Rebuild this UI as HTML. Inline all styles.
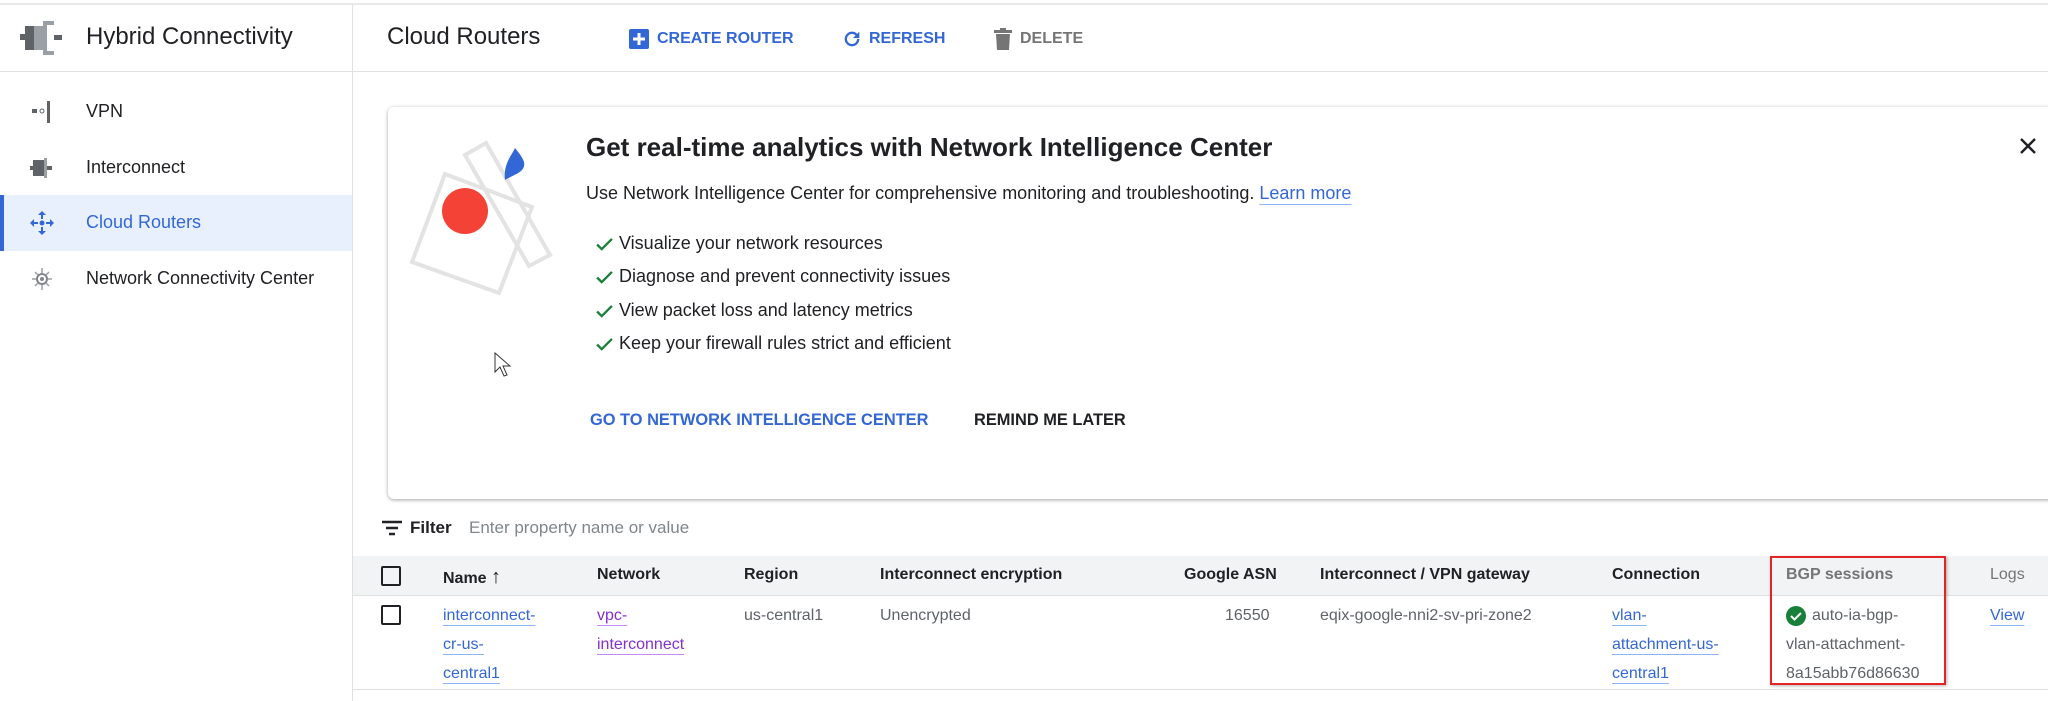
<!DOCTYPE html>
<html><head><meta charset="utf-8"><style>
*{box-sizing:border-box;margin:0;padding:0}
body{width:2048px;height:701px;overflow:hidden;background:#fff;font-family:"Liberation Sans",Arial,sans-serif;color:#202124;position:relative}
.a{position:absolute;white-space:nowrap}
.nav{font-size:18px;color:#202124}
.btn{font-size:16px;font-weight:bold;color:#3367d6}
.th{font-size:16px;font-weight:bold;color:#202124;top:566px}
.td{font-size:16px;color:#5f6368;line-height:29px}
.lk{color:#3367d6;text-decoration:underline;text-underline-offset:5px;text-decoration-color:#8ab4f8}
.chk{position:absolute;left:596px;width:17px;height:13px}
.li{font-size:18px;color:#202124;left:619px}
</style></head><body>
<div class="a" style="left:0;top:3px;width:2048px;height:2px;background:#e8e8e8"></div>
<div class="a" style="left:352px;top:4px;width:1px;height:697px;background:#e0e0e0"></div>
<div class="a" style="left:0;top:71px;width:2048px;height:1px;background:#e0e0e0"></div>

<svg class="a" style="left:20px;top:18px" width="44" height="40" viewBox="0 0 44 40"><rect x="0" y="16" width="5" height="6" fill="#5f6368"/><rect x="5" y="8" width="18" height="24" fill="#5f6368"/><rect x="14" y="8" width="9" height="24" fill="#9aa0a6"/><rect x="23" y="3" width="4" height="34" fill="#9aa0a6"/><rect x="27" y="3" width="7" height="4" fill="#9aa0a6"/><rect x="27" y="33" width="7" height="4" fill="#9aa0a6"/><rect x="34" y="17" width="8" height="5" fill="#5f6368"/></svg>
<div class="a" style="left:86px;top:23px;font-size:24px">Hybrid Connectivity</div>

<svg class="a" style="left:32px;top:101px" width="20" height="22"><rect x="0" y="8" width="5" height="4" fill="#5f6368"/><circle cx="10" cy="10" r="2" fill="none" stroke="#5f6368"/><rect x="15" y="0" width="3" height="22" fill="#5f6368"/></svg>
<div class="a nav" style="left:86px;top:101px">VPN</div>
<svg class="a" style="left:30px;top:157px" width="24" height="22"><rect x="0" y="9" width="3" height="4" fill="#5f6368"/><rect x="3" y="3" width="11" height="16" fill="#5f6368"/><rect x="14" y="1" width="3" height="20" fill="#9aa0a6"/><rect x="17" y="9" width="5" height="4" fill="#5f6368"/></svg>
<div class="a nav" style="left:86px;top:157px">Interconnect</div>
<div class="a" style="left:0;top:195px;width:352px;height:56px;background:#e8f0fe"></div>
<div class="a" style="left:0;top:195px;width:4px;height:56px;background:#3367d6"></div>
<svg class="a" style="left:30px;top:211px" width="24" height="24" viewBox="0 0 24 24" fill="#3367d6"><path d="M12 0l4 4h-3v4h-2V4H8z M12 24l-4-4h3v-4h2v4h3z M0 12l4-4v3h4v2H4v3z M24 12l-4 4v-3h-4v-2h4V8z"/><circle cx="12" cy="12" r="2.5"/></svg>
<div class="a nav" style="left:86px;top:212px;color:#3367d6">Cloud Routers</div>
<svg class="a" style="left:32px;top:268px" width="20" height="22" viewBox="0 0 20 22"><circle cx="10" cy="11" r="5" fill="none" stroke="#80868b" stroke-width="2"/><circle cx="10" cy="11" r="2" fill="#80868b"/><path d="M10 0v5M10 17v5M0 11h4M16 11h4M3 4l3 3M17 4l-3 3M3 18l3-3M17 18l-3-3" stroke="#9aa0a6" stroke-width="1.5"/></svg>
<div class="a nav" style="left:86px;top:268px">Network Connectivity Center</div>

<div class="a" style="left:387px;top:23px;font-size:24px">Cloud Routers</div>
<svg class="a" style="left:629px;top:29px" width="20" height="20"><rect width="20" height="20" rx="2" fill="#3367d6"/><path d="M10 4v12M4 10h12" stroke="#fff" stroke-width="3"/></svg>
<div class="a btn" style="left:657px;top:30px">CREATE ROUTER</div>
<svg class="a" style="left:841px;top:28px" width="22" height="22" viewBox="0 0 24 24"><path fill="#3367d6" d="M17.65 6.35A7.96 7.96 0 0012 4a8 8 0 108 8h-2.5a5.5 5.5 0 11-1.6-3.9L13 11h7V4z"/></svg>
<div class="a btn" style="left:869px;top:30px">REFRESH</div>
<svg class="a" style="left:994px;top:28px" width="18" height="22" viewBox="0 0 18 22"><rect x="0" y="2" width="18" height="3" fill="#757575"/><rect x="6" y="0" width="6" height="3" fill="#757575"/><path d="M2 6h14l-1 16H3z" fill="#757575"/></svg>
<div class="a btn" style="left:1020px;top:30px;color:#757575">DELETE</div>

<div class="a" style="left:388px;top:107px;width:1680px;height:392px;border-radius:6px;box-shadow:0 1px 3px rgba(60,64,67,.35),0 1px 5px rgba(60,64,67,.15);background:#fff"></div>
<svg class="a" style="left:400px;top:130px" width="170" height="180">
<polygon points="45,44 132,77 99,163 12,132" fill="none" stroke="#e3e3e3" stroke-width="4"/>
<polygon points="65,25 86,13 150,125 129,136" fill="none" stroke="#e3e3e3" stroke-width="4"/>
<circle cx="65" cy="81" r="23" fill="#f44336"/>
<path d="M115 18 C112 25 103 34 105 50 C115 44 126 42 124 32 C122 26 118 22 115 18Z" fill="#3367d6"/>
</svg>
<svg class="a" style="left:494px;top:352px" width="20" height="26" viewBox="0 0 20 26"><path d="M1 1v19l5-5 4 9 3-1-4-9h7z" fill="#fff" stroke="#333" stroke-width="1"/></svg>
<div class="a" style="left:586px;top:132px;font-size:26px;font-weight:bold;color:#202124">Get real-time analytics with Network Intelligence Center</div>
<div class="a" style="left:586px;top:183px;font-size:18px">Use Network Intelligence Center for comprehensive monitoring and troubleshooting. <span class="lk" style="color:#3367d6">Learn more</span></div>
<svg class="chk" style="top:238px" viewBox="0 0 18 14"><path d="M1 7l5 5L17 1" fill="none" stroke="#188038" stroke-width="2.5"/></svg>
<div class="a li" style="top:233px">Visualize your network resources</div>
<svg class="chk" style="top:271px" viewBox="0 0 18 14"><path d="M1 7l5 5L17 1" fill="none" stroke="#188038" stroke-width="2.5"/></svg>
<div class="a li" style="top:266px">Diagnose and prevent connectivity issues</div>
<svg class="chk" style="top:305px" viewBox="0 0 18 14"><path d="M1 7l5 5L17 1" fill="none" stroke="#188038" stroke-width="2.5"/></svg>
<div class="a li" style="top:300px">View packet loss and latency metrics</div>
<svg class="chk" style="top:338px" viewBox="0 0 18 14"><path d="M1 7l5 5L17 1" fill="none" stroke="#188038" stroke-width="2.5"/></svg>
<div class="a li" style="top:333px">Keep your firewall rules strict and efficient</div>
<div class="a btn" style="left:590px;top:411px;font-size:16.4px">GO TO NETWORK INTELLIGENCE CENTER</div>
<div class="a btn" style="left:974px;top:411px;color:#202124;font-size:16.4px">REMIND ME LATER</div>
<svg class="a" style="left:2020px;top:138px" width="16" height="16"><path d="M1 1l14 14M15 1L1 15" stroke="#202124" stroke-width="2.4"/></svg>

<svg class="a" style="left:382px;top:520px" width="20" height="16"><path d="M0 2h20M4 8h12M7 14h6" stroke="#202124" stroke-width="2.4"/></svg>
<div class="a" style="left:410px;top:518px;font-size:17px;font-weight:bold">Filter</div>
<div class="a" style="left:469px;top:518px;font-size:17px;color:#80868b">Enter property name or value</div>

<div class="a" style="left:353px;top:556px;width:1695px;height:40px;background:#f1f3f4;border-bottom:1px solid #e0e0e0"></div>
<div class="a" style="left:353px;top:689px;width:1695px;height:1px;background:#e0e0e0"></div>
<div class="a" style="left:381px;top:566px;width:20px;height:20px;border:2px solid #202124;border-radius:2px"></div>
<div class="a th" style="left:443px">Name <span style="font-size:20px;font-weight:bold">&#8593;</span></div>
<div class="a th" style="left:597px">Network</div>
<div class="a th" style="left:744px">Region</div>
<div class="a th" style="left:880px">Interconnect encryption</div>
<div class="a th" style="left:1184px">Google ASN</div>
<div class="a th" style="left:1320px">Interconnect / VPN gateway</div>
<div class="a th" style="left:1612px">Connection</div>
<div class="a th" style="left:1786px;color:#757575">BGP sessions</div>
<div class="a th" style="left:1990px;color:#757575;font-weight:normal">Logs</div>

<div class="a" style="left:381px;top:605px;width:20px;height:20px;border:2px solid #202124;border-radius:2px"></div>
<div class="a td" style="left:443px;top:601px"><span class="lk">interconnect-</span><br><span class="lk">cr-us-</span><br><span class="lk">central1</span></div>
<div class="a td" style="left:597px;top:601px"><span class="lk" style="color:#8430ce;text-decoration-color:#c58af9">vpc-</span><br><span class="lk" style="color:#8430ce;text-decoration-color:#c58af9">interconnect</span></div>
<div class="a td" style="left:744px;top:601px">us-central1</div>
<div class="a td" style="left:880px;top:601px">Unencrypted</div>
<div class="a td" style="left:1225px;top:601px">16550</div>
<div class="a td" style="left:1320px;top:601px">eqix-google-nni2-sv-pri-zone2</div>
<div class="a td" style="left:1612px;top:601px"><span class="lk">vlan-</span><br><span class="lk">attachment-us-</span><br><span class="lk">central1</span></div>
<svg class="a" style="left:1786px;top:606px" width="20" height="20"><circle cx="10" cy="10" r="10" fill="#188038"/><path d="M5 10l3.5 3.5L15 7" fill="none" stroke="#fff" stroke-width="2"/></svg>
<div class="a td" style="left:1786px;top:601px;text-indent:26px">auto-ia-bgp-<br><span style="display:inline-block;text-indent:0">vlan-attachment-</span><br>8a15abb76d86630</div>
<div class="a td" style="left:1990px;top:601px"><span class="lk">View</span></div>
<div class="a" style="left:1770px;top:556px;width:176px;height:129px;border:2px solid #e32424;box-shadow:1px 1px 3px rgba(0,0,0,.3)"></div>
</body></html>
